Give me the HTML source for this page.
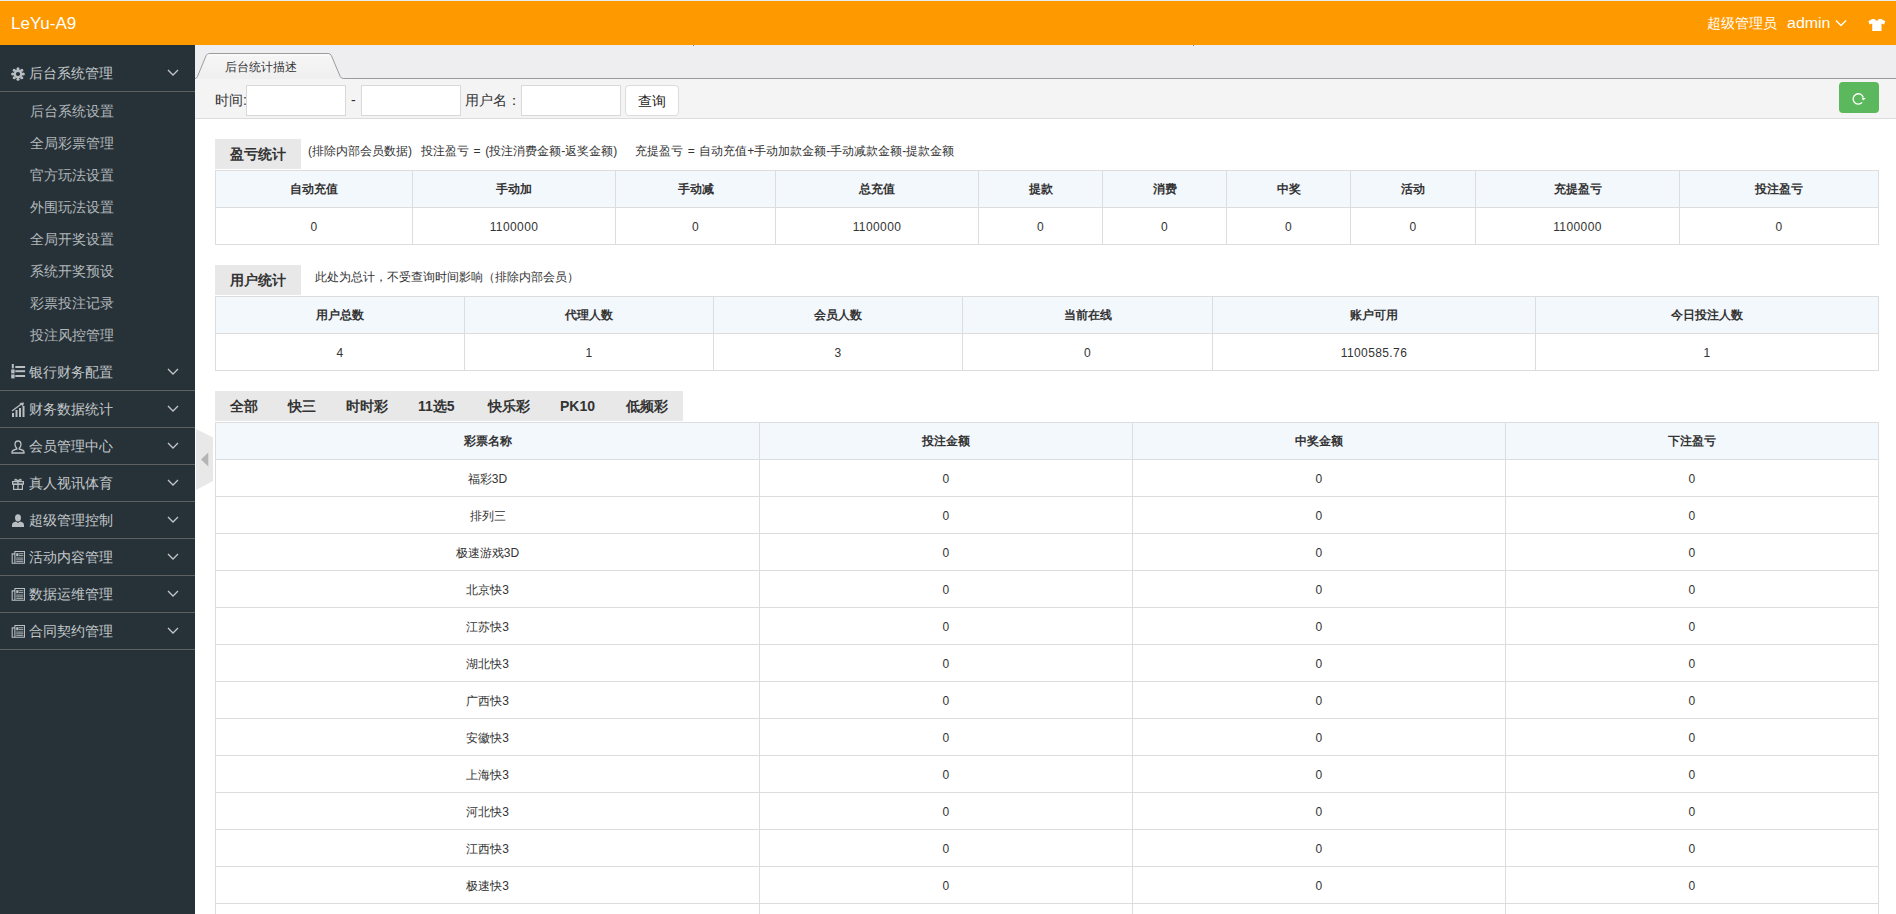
<!DOCTYPE html><html><head><meta charset="utf-8"><style>
*{box-sizing:border-box;}
html,body{margin:0;padding:0;}
body{width:1896px;height:914px;overflow:hidden;position:relative;background:#fff;font-family:"Liberation Sans",sans-serif;color:#333;font-size:12px;}
div,span,svg{position:absolute;}
.nw{white-space:nowrap;}
#hdr{left:0;top:0;width:1896px;height:45px;background:#ff9900;border-top:1px solid #e8ecef;}
#side{left:0;top:45px;width:195px;height:869px;background:#263238;}
.sep{left:0;width:195px;height:1px;background:#5f6163;}
.mt{left:29px;font-size:14px;color:#c3c7ca;line-height:20px;white-space:nowrap;}
.st{left:30px;font-size:14px;color:#b3b7ba;line-height:20px;white-space:nowrap;}
#tabbar{left:195px;top:45px;width:1701px;height:34px;background:#eeeef0;border-bottom:1px solid #9a9a9a;}
#filter{left:195px;top:79px;width:1701px;height:40px;background:#f4f4f4;border-bottom:1px solid #dcdcdc;}
.inp{top:85px;height:31px;width:100px;background:#fff;border:1px solid #d9d9d9;}
.lbl{font-size:14px;color:#333;line-height:20px;top:90px;white-space:nowrap;}
.box{left:215px;height:30px;width:86px;background:#e8e8e8;font-size:14px;font-weight:bold;color:#333;text-align:center;line-height:30px;}
.desc{font-size:12px;color:#333;line-height:16px;white-space:pre;word-spacing:1.2px;}
table{position:absolute;border-collapse:collapse;table-layout:fixed;}
td,th{border:1px solid #dddddd;height:37px;padding:0;}
td{padding-top:2px;}
.n{letter-spacing:0.4px;}
td,th{text-align:center;font-size:12px;color:#333;}
th{background:#f3f8fd;font-weight:bold;}
#ltabs{left:215px;top:391px;width:468px;height:30px;background:#e8e8e8;}
.lt{top:0;line-height:30px;font-size:14px;font-weight:bold;color:#333;white-space:nowrap;}
</style></head><body>
<div id="hdr"></div>
<div class="nw" style="left:11px;top:14px;font-size:17px;color:#fff;line-height:20px;">LeYu-A9</div>
<div class="nw" style="left:1707px;top:13px;font-size:14px;color:#fff;line-height:20px;">超级管理员</div>
<div class="nw" style="left:1787px;top:13px;font-size:14px;color:#fff;line-height:20px;transform:scaleX(1.14);transform-origin:0 0;">admin</div>
<svg style="left:1835px;top:19px" width="12" height="8" viewBox="0 0 12 8"><polyline points="1,1.5 6,6.5 11,1.5" fill="none" stroke="#fff" stroke-width="1.4"/></svg>
<svg style="left:1868px;top:18px" width="18" height="14" viewBox="0 0 18 14"><path d="M4.2,1.1 L0.4,3.3 L1.6,6.6 L4.2,5.6 L4.2,12.9 L13.5,12.9 L13.5,5.6 L16.1,6.6 L17.3,3.3 L13.3,1.1 L10.9,1.1 Q8.8,4.4 6.7,1.1 Z" fill="#fff"/></svg>
<div id="side"></div>
<svg style="left:11px;top:67px" width="14" height="14" viewBox="0 0 14 14"><g fill="#b9bec2"><circle cx="7" cy="7" r="4.4"/><circle cx="12.30" cy="7.00" r="1.55"/><circle cx="10.75" cy="10.75" r="1.55"/><circle cx="7.00" cy="12.30" r="1.55"/><circle cx="3.25" cy="10.75" r="1.55"/><circle cx="1.70" cy="7.00" r="1.55"/><circle cx="3.25" cy="3.25" r="1.55"/><circle cx="7.00" cy="1.70" r="1.55"/><circle cx="10.75" cy="3.25" r="1.55"/></g><circle cx="7" cy="7" r="2.1" fill="#263238"/></svg>
<div class="mt" style="top:63px">后台系统管理</div>
<svg style="left:167px;top:69px" width="12" height="8" viewBox="0 0 12 8"><polyline points="1,1 6,6 11,1" fill="none" stroke="#c3c7ca" stroke-width="1.3"/></svg>
<div class="sep" style="top:91px"></div>
<svg style="left:11px;top:364px" width="15" height="15" viewBox="0 0 15 15"><g fill="#b9bec2"><rect x="0.8" y="0" width="2" height="4.4"/><rect x="0.2" y="5.4" width="3.4" height="4"/><rect x="0.2" y="10.4" width="3.4" height="4"/><rect x="4.3" y="2" width="9.8" height="2"/><rect x="4.3" y="6.2" width="9.8" height="2"/><rect x="4.3" y="11" width="9.8" height="2"/></g></svg>
<div class="mt" style="top:362px">银行财务配置</div>
<svg style="left:167px;top:368px" width="12" height="8" viewBox="0 0 12 8"><polyline points="1,1 6,6 11,1" fill="none" stroke="#c3c7ca" stroke-width="1.3"/></svg>
<div class="sep" style="top:390px"></div>
<svg style="left:11px;top:402px" width="14" height="15" viewBox="0 0 14 15"><g fill="#b9bec2"><rect x="1" y="11" width="2" height="4"/><rect x="4.5" y="8" width="2" height="7"/><rect x="8" y="6" width="2" height="9"/><rect x="11.5" y="4" width="2" height="11"/></g><path d="M1,9 L11,1.5" stroke="#b9bec2" stroke-width="1.3" fill="none"/><path d="M8.5,1 L13,0.5 L12,4.5 Z" fill="#b9bec2"/></svg>
<div class="mt" style="top:399px">财务数据统计</div>
<svg style="left:167px;top:405px" width="12" height="8" viewBox="0 0 12 8"><polyline points="1,1 6,6 11,1" fill="none" stroke="#c3c7ca" stroke-width="1.3"/></svg>
<div class="sep" style="top:427px"></div>
<svg style="left:11px;top:440px" width="14" height="14" viewBox="0 0 14 14"><path d="M7,1 C9.2,1 10,2.8 10,4.6 C10,6.4 9,7.6 8.2,8.3 L8.2,9 C10.5,9.6 13,10.6 13,12 L13,13 L1,13 L1,12 C1,10.6 3.5,9.6 5.8,9 L5.8,8.3 C5,7.6 4,6.4 4,4.6 C4,2.8 4.8,1 7,1 Z" fill="none" stroke="#b9bec2" stroke-width="1.3"/></svg>
<div class="mt" style="top:436px">会员管理中心</div>
<svg style="left:167px;top:442px" width="12" height="8" viewBox="0 0 12 8"><polyline points="1,1 6,6 11,1" fill="none" stroke="#c3c7ca" stroke-width="1.3"/></svg>
<div class="sep" style="top:464px"></div>
<svg style="left:12px;top:478px" width="12" height="12" viewBox="0 0 12 12"><g fill="none" stroke="#b9bec2" stroke-width="1.2"><rect x="0.6" y="3.6" width="10.8" height="2.6"/><rect x="1.6" y="6.2" width="8.8" height="5.2"/><path d="M6,3.6 L6,11.4"/><path d="M6,3.6 C5,1 2.5,0.5 3,2.5 C3.3,3.3 5,3.6 6,3.6 C7,3.6 8.7,3.3 9,2.5 C9.5,0.5 7,1 6,3.6"/></g></svg>
<div class="mt" style="top:473px">真人视讯体育</div>
<svg style="left:167px;top:479px" width="12" height="8" viewBox="0 0 12 8"><polyline points="1,1 6,6 11,1" fill="none" stroke="#c3c7ca" stroke-width="1.3"/></svg>
<div class="sep" style="top:501px"></div>
<svg style="left:12px;top:514px" width="12" height="13" viewBox="0 0 12 13"><g fill="#b9bec2"><ellipse cx="6" cy="3.8" rx="3" ry="3.6"/><path d="M0,13 L0,11 C0,9 2,8 4,7.6 L6,9 L8,7.6 C10,8 12,9 12,11 L12,13 Z"/></g></svg>
<div class="mt" style="top:510px">超级管理控制</div>
<svg style="left:167px;top:516px" width="12" height="8" viewBox="0 0 12 8"><polyline points="1,1 6,6 11,1" fill="none" stroke="#c3c7ca" stroke-width="1.3"/></svg>
<div class="sep" style="top:538px"></div>
<svg style="left:11px;top:550px" width="14" height="14" viewBox="0 0 14 14"><g fill="none" stroke="#b9bec2" stroke-width="1.1"><path d="M3.9,3.9 L1.2,3.9 L1.2,13.3 L13.5,13.3 L13.5,1.5 L3.9,1.5 L3.9,13.3"/></g><g fill="#b9bec2"><rect x="5.2" y="3.2" width="2.3" height="3"/><rect x="8" y="3.3" width="4.3" height="0.9"/><rect x="8" y="5.2" width="4.3" height="0.9"/><rect x="5.2" y="7.6" width="7.1" height="0.9"/><rect x="5.2" y="9.4" width="7.1" height="0.9"/><rect x="5.2" y="11.2" width="7.1" height="0.9"/></g></svg>
<div class="mt" style="top:547px">活动内容管理</div>
<svg style="left:167px;top:553px" width="12" height="8" viewBox="0 0 12 8"><polyline points="1,1 6,6 11,1" fill="none" stroke="#c3c7ca" stroke-width="1.3"/></svg>
<div class="sep" style="top:575px"></div>
<svg style="left:11px;top:587px" width="14" height="14" viewBox="0 0 14 14"><g fill="none" stroke="#b9bec2" stroke-width="1.1"><path d="M3.9,3.9 L1.2,3.9 L1.2,13.3 L13.5,13.3 L13.5,1.5 L3.9,1.5 L3.9,13.3"/></g><g fill="#b9bec2"><rect x="5.2" y="3.2" width="2.3" height="3"/><rect x="8" y="3.3" width="4.3" height="0.9"/><rect x="8" y="5.2" width="4.3" height="0.9"/><rect x="5.2" y="7.6" width="7.1" height="0.9"/><rect x="5.2" y="9.4" width="7.1" height="0.9"/><rect x="5.2" y="11.2" width="7.1" height="0.9"/></g></svg>
<div class="mt" style="top:584px">数据运维管理</div>
<svg style="left:167px;top:590px" width="12" height="8" viewBox="0 0 12 8"><polyline points="1,1 6,6 11,1" fill="none" stroke="#c3c7ca" stroke-width="1.3"/></svg>
<div class="sep" style="top:612px"></div>
<svg style="left:11px;top:624px" width="14" height="14" viewBox="0 0 14 14"><g fill="none" stroke="#b9bec2" stroke-width="1.1"><path d="M3.9,3.9 L1.2,3.9 L1.2,13.3 L13.5,13.3 L13.5,1.5 L3.9,1.5 L3.9,13.3"/></g><g fill="#b9bec2"><rect x="5.2" y="3.2" width="2.3" height="3"/><rect x="8" y="3.3" width="4.3" height="0.9"/><rect x="8" y="5.2" width="4.3" height="0.9"/><rect x="5.2" y="7.6" width="7.1" height="0.9"/><rect x="5.2" y="9.4" width="7.1" height="0.9"/><rect x="5.2" y="11.2" width="7.1" height="0.9"/></g></svg>
<div class="mt" style="top:621px">合同契约管理</div>
<svg style="left:167px;top:627px" width="12" height="8" viewBox="0 0 12 8"><polyline points="1,1 6,6 11,1" fill="none" stroke="#c3c7ca" stroke-width="1.3"/></svg>
<div class="sep" style="top:649px"></div>
<div class="st" style="top:101px">后台系统设置</div>
<div class="st" style="top:133px">全局彩票管理</div>
<div class="st" style="top:165px">官方玩法设置</div>
<div class="st" style="top:197px">外围玩法设置</div>
<div class="st" style="top:229px">全局开奖设置</div>
<div class="st" style="top:261px">系统开奖预设</div>
<div class="st" style="top:293px">彩票投注记录</div>
<div class="st" style="top:325px">投注风控管理</div>
<svg style="left:196px;top:429px" width="17" height="61" viewBox="0 0 17 61"><path d="M0,0 L17,8.5 L17,52 L0,61 Z" fill="#e8e8e8"/><path d="M5,30.5 L12.3,23.5 L12.3,37.5 Z" fill="#b5b5b5"/></svg>
<div id="tabbar"></div>
<div style="left:693px;top:45px;width:1px;height:1px;background:#7a828c"></div>
<div style="left:1193px;top:45px;width:1px;height:1px;background:#7a828c"></div>
<svg style="left:195px;top:52px" width="152" height="28" viewBox="0 0 152 28"><defs><linearGradient id="tg" x1="0" y1="0" x2="0" y2="1"><stop offset="0" stop-color="#f6f6f6"/><stop offset="1" stop-color="#efefef"/></linearGradient></defs><path d="M0,26.5 Q1.5,26.5 2.5,24.5 L11,3.8 Q12,1.5 15,1.5 L133,1.5 Q135.5,1.5 136.5,3.8 L145.2,24.5 Q146.2,26.5 148.5,26.5 L152,26.5 L152,28 L0,28 Z" fill="url(#tg)"/><path d="M0,26.5 Q1.5,26.5 2.5,24.5 L11,3.8 Q12,1.5 15,1.5 L133,1.5 Q135.5,1.5 136.5,3.8 L145.2,24.5 Q146.2,26.5 148.5,26.5 L152,26.5" fill="none" stroke="#9c9c9c" stroke-width="1"/><path d="M12.5,3 L134.5,3" stroke="#fff" stroke-width="1" opacity="0.8"/><rect x="1" y="27" width="151" height="1" fill="#f4f4f4"/></svg>
<div class="nw" style="left:225px;top:59px;font-size:12px;line-height:16px;color:#333">后台统计描述</div>
<div id="filter"></div>
<div class="lbl" style="left:215px">时间:</div>
<div class="inp" style="left:246px"></div>
<div class="lbl" style="left:351px">-</div>
<div class="inp" style="left:361px"></div>
<div class="lbl" style="left:465px">用户名：</div>
<div class="inp" style="left:521px"></div>
<div style="left:625px;top:85px;width:54px;height:31px;background:#fff;border:1px solid #dcdcdc;border-radius:4px;"></div>
<div class="lbl" style="left:638px;top:91px;color:#222">查询</div>
<div style="left:1839px;top:82px;width:40px;height:31px;background:#5cb85c;border-radius:4px;"></div>
<svg style="left:1848px;top:88px" width="22" height="22" viewBox="0 0 22 22"><path d="M14.2,14.4 A5.2,5.2 0 1 1 15.3,9.4" fill="none" stroke="#fff" stroke-width="1.4"/><path d="M13.6,9.6 L17.9,10.3 L15.0,12.6 Z" fill="#fff"/></svg>
<div class="box" style="top:139px">盈亏统计</div>
<div class="desc" style="left:308px;top:143px">(排除内部会员数据)  投注盈亏 = (投注消费金额-返奖金额)    充提盈亏 = 自动充值+手动加款金额-手动减款金额-提款金额</div>
<table style="left:215px;top:170px;width:1663px"><colgroup><col style="width:197px"><col style="width:203px"><col style="width:160px"><col style="width:203px"><col style="width:124px"><col style="width:124px"><col style="width:124px"><col style="width:125px"><col style="width:204px"><col style="width:199px"></colgroup><tr><th>自动充值</th><th>手动加</th><th>手动减</th><th>总充值</th><th>提款</th><th>消费</th><th>中奖</th><th>活动</th><th>充提盈亏</th><th>投注盈亏</th></tr><tr><td class="n">0</td><td class="n">1100000</td><td class="n">0</td><td class="n">1100000</td><td class="n">0</td><td class="n">0</td><td class="n">0</td><td class="n">0</td><td class="n">1100000</td><td class="n">0</td></tr></table>
<div class="box" style="top:265px">用户统计</div>
<div class="desc" style="left:315px;top:269px">此处为总计，不受查询时间影响（排除内部会员）</div>
<table style="left:215px;top:296px;width:1663px"><colgroup><col style="width:249px"><col style="width:249px"><col style="width:249px"><col style="width:250px"><col style="width:323px"><col style="width:343px"></colgroup><tr><th>用户总数</th><th>代理人数</th><th>会员人数</th><th>当前在线</th><th>账户可用</th><th>今日投注人数</th></tr><tr><td class="n">4</td><td class="n">1</td><td class="n">3</td><td class="n">0</td><td class="n">1100585.76</td><td class="n">1</td></tr></table>
<div id="ltabs"></div>
<div class="lt" style="left:230px;top:391px">全部</div>
<div class="lt" style="left:288px;top:391px">快三</div>
<div class="lt" style="left:346px;top:391px">时时彩</div>
<div class="lt" style="left:418px;top:391px">11选5</div>
<div class="lt" style="left:488px;top:391px">快乐彩</div>
<div class="lt" style="left:560px;top:391px">PK10</div>
<div class="lt" style="left:626px;top:391px">低频彩</div>
<table style="left:215px;top:422px;width:1663px"><colgroup><col style="width:544px"><col style="width:373px"><col style="width:373px"><col style="width:373px"></colgroup><tr><th>彩票名称</th><th>投注金额</th><th>中奖金额</th><th>下注盈亏</th></tr><tr><td>福彩3D</td><td class="n">0</td><td class="n">0</td><td class="n">0</td></tr><tr><td>排列三</td><td class="n">0</td><td class="n">0</td><td class="n">0</td></tr><tr><td>极速游戏3D</td><td class="n">0</td><td class="n">0</td><td class="n">0</td></tr><tr><td>北京快3</td><td class="n">0</td><td class="n">0</td><td class="n">0</td></tr><tr><td>江苏快3</td><td class="n">0</td><td class="n">0</td><td class="n">0</td></tr><tr><td>湖北快3</td><td class="n">0</td><td class="n">0</td><td class="n">0</td></tr><tr><td>广西快3</td><td class="n">0</td><td class="n">0</td><td class="n">0</td></tr><tr><td>安徽快3</td><td class="n">0</td><td class="n">0</td><td class="n">0</td></tr><tr><td>上海快3</td><td class="n">0</td><td class="n">0</td><td class="n">0</td></tr><tr><td>河北快3</td><td class="n">0</td><td class="n">0</td><td class="n">0</td></tr><tr><td>江西快3</td><td class="n">0</td><td class="n">0</td><td class="n">0</td></tr><tr><td>极速快3</td><td class="n">0</td><td class="n">0</td><td class="n">0</td></tr><tr><td>甘肃快3</td><td class="n">0</td><td class="n">0</td><td class="n">0</td></tr></table>
</body></html>
